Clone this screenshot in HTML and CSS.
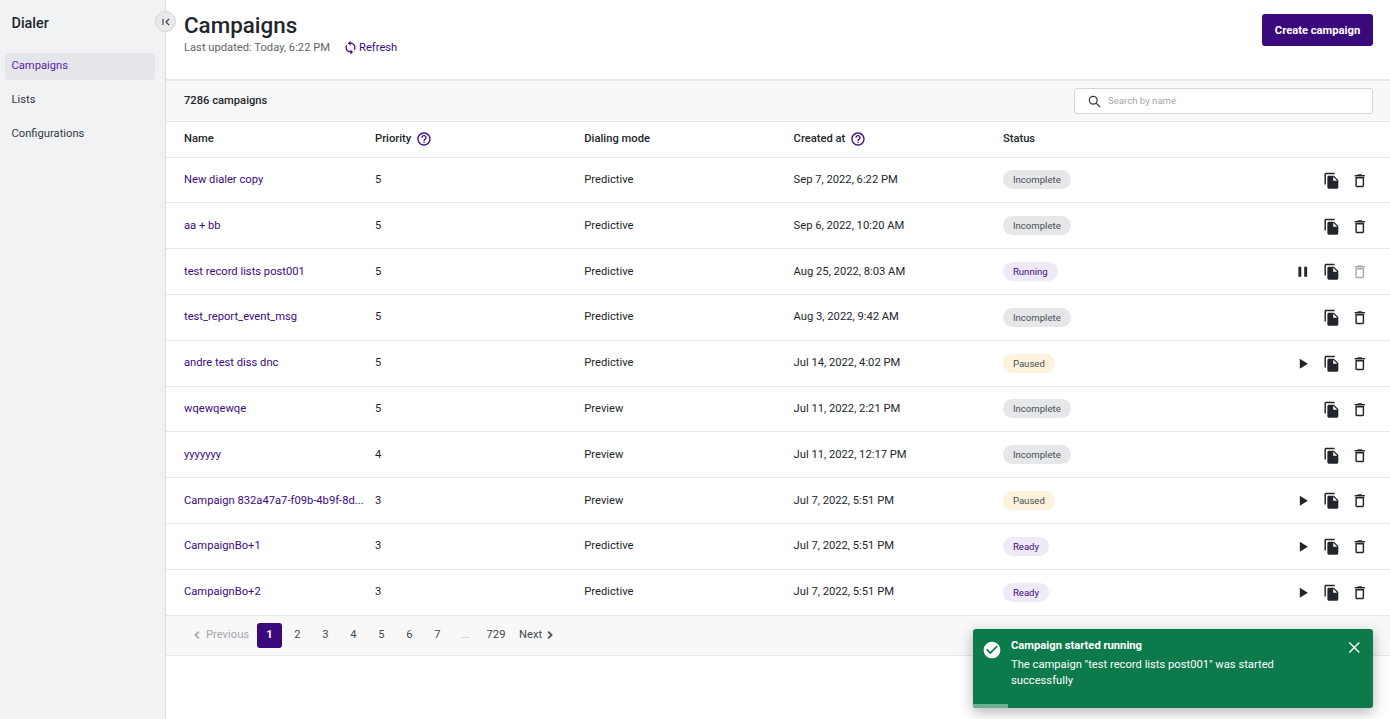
FILE: index.html
```html
<!DOCTYPE html>
<html lang="en">
<head>
  <meta charset="UTF-8">
  <meta name="viewport" content="width=device-width, initial-scale=1.0">
  <title>Campaigns</title>
  <link rel="stylesheet" href="styles.css">
</head>
<body>
  <svg class="sprite" width="0" height="0">
    <symbol id="i-copy" viewBox="0 0 24 24"><path d="M16 1H4c-1.1 0-2 .9-2 2v14h2V3h12V1zm-1 4l6 6v10c0 1.1-.9 2-2 2H7.99C6.89 23 6 22.1 6 21l.01-14c0-1.1.89-2 1.99-2h7zm-1 7h5.5L14 6.5V12z"/></symbol>
    <symbol id="i-trash" viewBox="0 0 24 24"><path d="M6 19c0 1.1.9 2 2 2h8c1.1 0 2-.9 2-2V7H6v12zM8 9h8v10H8V9zm7.5-5l-1-1h-5l-1 1H5v2h14V4z"/></symbol>
    <symbol id="i-play" viewBox="0 0 24 24"><path d="M8 5v14l11-7z"/></symbol>
    <symbol id="i-pause" viewBox="0 0 24 24"><path d="M6 19h4V5H6v14zm8-14v14h4V5h-4z"/></symbol>
    <symbol id="i-help" viewBox="0 0 24 24"><path d="M11 18h2v-2h-2v2zm1-16C6.48 2 2 6.48 2 12s4.48 10 10 10 10-4.48 10-10S17.52 2 12 2zm0 18c-4.41 0-8-3.59-8-8s3.59-8 8-8 8 3.59 8 8-3.59 8-8 8zm0-14c-2.21 0-4 1.79-4 4h2c0-1.1.9-2 2-2s2 .9 2 2c0 2-3 1.75-3 5h2c0-2.25 3-2.5 3-5 0-2.21-1.79-4-4-4z"/></symbol>
    <symbol id="i-left" viewBox="0 0 24 24"><path d="M15.41 7.41L14 6l-6 6 6 6 1.41-1.41L10.83 12z"/></symbol>
    <symbol id="i-right" viewBox="0 0 24 24"><path d="M8.59 16.59L10 18l6-6-6-6-1.41 1.41L13.17 12z"/></symbol>
  </svg>

  <div class="app">
    <aside class="sidebar">
      <div class="sidebar-title">Dialer</div>
      <nav class="side-nav">
        <a class="side-link active">Campaigns</a>
        <a class="side-link">Lists</a>
        <a class="side-link">Configurations</a>
      </nav>
      <button class="collapse-btn">
        <svg viewBox="0 0 12 12" width="12" height="12"><path d="M3 3v6M9 3L6 6l3 3" fill="none" stroke="#33383e" stroke-width="1.1"/></svg>
      </button>
    </aside>

    <main class="main">
      <header class="page-header">
        <div>
          <h1 class="page-title">Campaigns</h1>
          <div class="page-meta">
            <span>Last updated: Today, 6:22 PM</span>
            <a class="refresh">
              <svg viewBox="0 0 24 24" width="15" height="15"><path d="M12 4V1L8 5l4 4V6c3.31 0 6 2.69 6 6 0 1.01-.25 1.97-.7 2.8l1.46 1.46C19.54 15.03 20 13.57 20 12c0-4.42-3.58-8-8-8zm0 14c-3.31 0-6-2.69-6-6 0-1.01.25-1.97.7-2.8L5.24 7.74C4.46 8.97 4 10.43 4 12c0 4.42 3.58 8 8 8v3l4-4-4-4v3z"/></svg>
              Refresh
            </a>
          </div>
        </div>
        <button class="create-btn">Create campaign</button>
      </header>

      <div class="toolbar">
        <span class="count">7286 campaigns</span>
        <div class="search">
          <svg viewBox="0 0 24 24" width="15" height="15"><circle cx="10" cy="10" r="6.2" fill="none" stroke="#33383e" stroke-width="2"/><path d="M14.6 14.6L21 21" stroke="#33383e" stroke-width="2.2" fill="none"/></svg>
          <span class="search-hint">Search by name</span>
        </div>
      </div>

      <div class="grid-row head-row">
        <div>Name</div>
        <div class="with-help">Priority <svg class="help"><use href="#i-help"/></svg></div>
        <div>Dialing mode</div>
        <div class="with-help">Created at <svg class="help"><use href="#i-help"/></svg></div>
        <div>Status</div>
      </div>

      <div class="grid-row">
        <a class="name">New dialer copy</a><div>5</div><div>Predictive</div><div>Sep 7, 2022, 6:22 PM</div>
        <div class="status-cell"><span class="badge grey">Incomplete</span>
          <div class="actions"><svg class="ic"><use href="#i-copy"/></svg><svg class="ic"><use href="#i-trash"/></svg></div></div>
      </div>
      <div class="grid-row">
        <a class="name">aa + bb</a><div>5</div><div>Predictive</div><div>Sep 6, 2022, 10:20 AM</div>
        <div class="status-cell"><span class="badge grey">Incomplete</span>
          <div class="actions"><svg class="ic"><use href="#i-copy"/></svg><svg class="ic"><use href="#i-trash"/></svg></div></div>
      </div>
      <div class="grid-row">
        <a class="name">test record lists post001</a><div>5</div><div>Predictive</div><div>Aug 25, 2022, 8:03 AM</div>
        <div class="status-cell"><span class="badge purple">Running</span>
          <div class="actions"><svg class="ic"><use href="#i-pause"/></svg><svg class="ic"><use href="#i-copy"/></svg><svg class="ic off"><use href="#i-trash"/></svg></div></div>
      </div>
      <div class="grid-row">
        <a class="name">test_report_event_msg</a><div>5</div><div>Predictive</div><div>Aug 3, 2022, 9:42 AM</div>
        <div class="status-cell"><span class="badge grey">Incomplete</span>
          <div class="actions"><svg class="ic"><use href="#i-copy"/></svg><svg class="ic"><use href="#i-trash"/></svg></div></div>
      </div>
      <div class="grid-row">
        <a class="name">andre test diss dnc</a><div>5</div><div>Predictive</div><div>Jul 14, 2022, 4:02 PM</div>
        <div class="status-cell"><span class="badge yellow">Paused</span>
          <div class="actions"><svg class="ic"><use href="#i-play"/></svg><svg class="ic"><use href="#i-copy"/></svg><svg class="ic"><use href="#i-trash"/></svg></div></div>
      </div>
      <div class="grid-row">
        <a class="name">wqewqewqe</a><div>5</div><div>Preview</div><div>Jul 11, 2022, 2:21 PM</div>
        <div class="status-cell"><span class="badge grey">Incomplete</span>
          <div class="actions"><svg class="ic"><use href="#i-copy"/></svg><svg class="ic"><use href="#i-trash"/></svg></div></div>
      </div>
      <div class="grid-row">
        <a class="name">yyyyyyy</a><div>4</div><div>Preview</div><div>Jul 11, 2022, 12:17 PM</div>
        <div class="status-cell"><span class="badge grey">Incomplete</span>
          <div class="actions"><svg class="ic"><use href="#i-copy"/></svg><svg class="ic"><use href="#i-trash"/></svg></div></div>
      </div>
      <div class="grid-row">
        <a class="name">Campaign 832a47a7-f09b-4b9f-8d...</a><div>3</div><div>Preview</div><div>Jul 7, 2022, 5:51 PM</div>
        <div class="status-cell"><span class="badge yellow">Paused</span>
          <div class="actions"><svg class="ic"><use href="#i-play"/></svg><svg class="ic"><use href="#i-copy"/></svg><svg class="ic"><use href="#i-trash"/></svg></div></div>
      </div>
      <div class="grid-row">
        <a class="name">CampaignBo+1</a><div>3</div><div>Predictive</div><div>Jul 7, 2022, 5:51 PM</div>
        <div class="status-cell"><span class="badge purple">Ready</span>
          <div class="actions"><svg class="ic"><use href="#i-play"/></svg><svg class="ic"><use href="#i-copy"/></svg><svg class="ic"><use href="#i-trash"/></svg></div></div>
      </div>
      <div class="grid-row">
        <a class="name">CampaignBo+2</a><div>3</div><div>Predictive</div><div>Jul 7, 2022, 5:51 PM</div>
        <div class="status-cell"><span class="badge purple">Ready</span>
          <div class="actions"><svg class="ic"><use href="#i-play"/></svg><svg class="ic"><use href="#i-copy"/></svg><svg class="ic"><use href="#i-trash"/></svg></div></div>
      </div>

      <div class="pager">
        <span class="pager-prev"><svg class="chev"><use href="#i-left"/></svg>Previous</span>
        <span class="page current">1</span>
        <span class="page">2</span>
        <span class="page">3</span>
        <span class="page">4</span>
        <span class="page">5</span>
        <span class="page">6</span>
        <span class="page">7</span>
        <span class="page dots">...</span>
        <span class="page wide">729</span>
        <span class="pager-next">Next<svg class="chev"><use href="#i-right"/></svg></span>
      </div>
    </main>
  </div>

  <div class="toast">
    <svg class="toast-check" viewBox="0 0 24 24"><path d="M12 2C6.48 2 2 6.48 2 12s4.48 10 10 10 10-4.48 10-10S17.52 2 12 2zm-2 15l-5-5 1.41-1.41L10 14.17l7.59-7.59L19 8l-9 9z"/></svg>
    <div class="toast-body">
      <div class="toast-title">Campaign started running</div>
      <div class="toast-text">The campaign "test record lists post001" was started successfully</div>
    </div>
    <svg class="toast-close" viewBox="0 0 14 14"><path d="M1.5 1.5l11 11M12.5 1.5l-11 11" stroke="#fff" stroke-width="1.5" fill="none"/></svg>
    <div class="toast-progress"></div>
  </div>
</body>
</html>
```

FILE: styles.css
```css
* {
  box-sizing: border-box;
}
body {
  margin: 0;
  height: 719px;
  overflow: hidden;
  font-family: Roboto, sans-serif;
  font-size: 11.2px;
  color: #22262b;
  background-color: #fff;
}
.sprite {
  position: absolute;
}
.app {
  display: flex;
  height: 719px;
}

/* sidebar */
.sidebar {
  position: relative;
  width: 166px;
  flex: none;
  background-color: #f1f2f4;
  border-right: 1px solid #dcdde0;
  padding: 0 10px 0 5px;
}
.sidebar-title {
  font-size: 14.4px;
  font-weight: 500;
  padding: 15px 0 0 6.5px;
  height: 53px;
}
.side-nav {
  display: flex;
  flex-direction: column;
  gap: 7px;
}
.side-link {
  display: block;
  height: 27px;
  line-height: 25px;
  padding-left: 6.5px;
  border-radius: 3px;
  color: #33383e;
}
.side-link.active {
  background-color: #e5e6e9;
  color: #5a1cb0;
}
.collapse-btn {
  position: absolute;
  top: 11px;
  left: 155px;
  width: 21px;
  height: 21px;
  padding: 0;
  display: flex;
  align-items: center;
  justify-content: center;
  border: 1px solid #d5d6d9;
  border-radius: 50%;
  background-color: #e8e9eb;
}

/* header */
.main {
  flex: 1;
  min-width: 0;
}
.page-header {
  display: flex;
  justify-content: space-between;
  align-items: flex-start;
  height: 81px;
  padding: 14px 17px 0 18px;
  border-bottom: 2px solid #e6e7e9;
}
.page-title {
  margin: -1px 0 0;
  font-size: 22.4px;
  font-weight: 500;
  line-height: 24px;
}
.page-meta {
  display: flex;
  align-items: center;
  margin-top: 2px;
  height: 16px;
  color: #5f656c;
}
.refresh {
  display: flex;
  align-items: center;
  gap: 1px;
  margin-left: 13px;
  color: #3b0a80;
}
.refresh svg {
  fill: #3b0a80;
}
.create-btn {
  width: 111px;
  height: 32px;
  border: none;
  border-radius: 3px;
  background-color: #3a0a7d;
  color: #fff;
  font-family: Roboto, sans-serif;
  font-size: 11.2px;
  font-weight: 700;
}

/* toolbar */
.toolbar {
  display: flex;
  justify-content: space-between;
  align-items: center;
  height: 41px;
  padding: 0 17px 0 18px;
  background-color: #f8f8f8;
  border-bottom: 1px solid #e6e7e9;
}
.count {
  font-weight: 500;
  margin-bottom: 1px;
}
.search {
  display: flex;
  align-items: center;
  gap: 6px;
  width: 299px;
  height: 26px;
  padding-left: 12px;
  background-color: #fff;
  border: 1px solid #d3d5d8;
  border-radius: 3px;
  font-size: 9.6px;
  color: #a3a7ac;
}
.search-hint {
  margin-bottom: 1px;
}

/* table */
.grid-row {
  display: grid;
  grid-template-columns: 191px 209.3px 209.3px 209.3px 1fr;
  align-items: center;
  height: 45.8px;
  padding: 0 17px 1px 18px;
  border-bottom: 1px solid #e6e7e9;
}
.head-row {
  height: 35.6px;
  padding-bottom: 2px;
  font-weight: 500;
}
.with-help {
  display: flex;
  align-items: center;
  gap: 5px;
}
.help {
  width: 16px;
  height: 16px;
  fill: #3b0a80;
  margin-top: 2px;
}
.name {
  color: #3b0a80;
  white-space: nowrap;
}
.status-cell {
  display: flex;
  justify-content: space-between;
  align-items: center;
  margin-top: 1px;
}
.badge {
  height: 19px;
  line-height: 19px;
  padding: 0 10px;
  border-radius: 10px;
  font-size: 9.6px;
}
.badge.grey {
  background-color: #e6e7e9;
  color: #4a4f55;
}
.badge.purple {
  background-color: #f0eaf8;
  color: #3b0a80;
}
.badge.yellow {
  background-color: #fdf3dd;
  color: #4a4f55;
}
.actions {
  display: flex;
  gap: 11px;
  margin: 1px 4.5px 0 0;
}
.ic {
  width: 17.5px;
  height: 17.5px;
  fill: #22262b;
}
.ic.off {
  fill: #a8abaf;
}

/* pagination */
.pager {
  display: flex;
  align-items: center;
  height: 40px;
  padding-left: 24px;
  background-color: #f8f8f8;
  border-bottom: 1px solid #e6e7e9;
  color: #44494f;
}
.pager-prev {
  display: flex;
  align-items: center;
  width: 67px;
  margin-bottom: 1px;
  color: #a3a7ac;
}
.pager-next {
  display: flex;
  align-items: center;
  margin: 0 0 1px 5px;
}
.chev {
  width: 14px;
  height: 14px;
  fill: currentColor;
  stroke: currentColor;
  stroke-width: 1.5;
}
.pager-prev .chev {
  margin-right: 2px;
}
.pager-next .chev {
  margin-left: 1px;
}
.page {
  width: 25px;
  height: 25px;
  margin-right: 3px;
  line-height: 24px;
  text-align: center;
  border-radius: 3px;
}
.page.current {
  background-color: #3a0a7d;
  color: #fff;
  font-weight: 700;
}
.page.dots {
  color: #b0b3b7;
}
.page.wide {
  width: 30px;
}

/* toast */
.toast {
  position: absolute;
  top: 629px;
  left: 973px;
  width: 400px;
  height: 79px;
  display: flex;
  padding: 9px 12px 0 9px;
  background-color: #0d7a4c;
  border-radius: 3px;
  box-shadow: 0 4px 14px rgba(0, 0, 0, 0.3);
  color: #fff;
  overflow: hidden;
}
.toast-check {
  width: 20px;
  height: 20px;
  margin-top: 2px;
  fill: #fff;
  flex: none;
}
.toast-body {
  width: 300px;
  margin-left: 9px;
}
.toast-title {
  font-weight: 700;
  line-height: 15px;
}
.toast-text {
  margin-top: 4px;
  line-height: 16px;
}
.toast-close {
  width: 13px;
  height: 13px;
  margin: 3px 0 0 45px;
}
.toast-progress {
  position: absolute;
  left: 0;
  bottom: 0;
  width: 35px;
  height: 4px;
  background-color: #6fb095;
}
```
